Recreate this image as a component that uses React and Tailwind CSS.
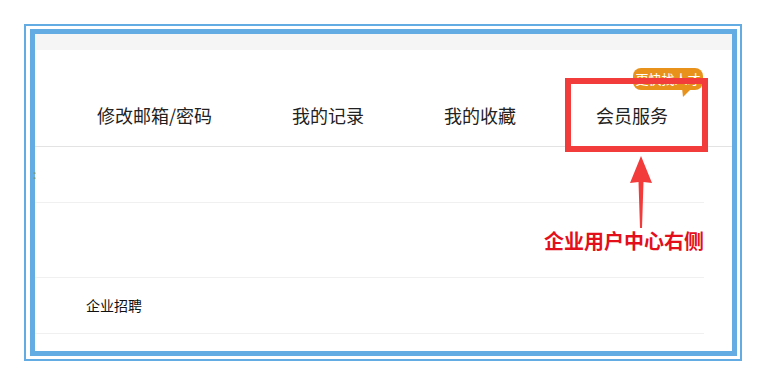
import React from 'react';

const navItems = ['修改邮箱/密码', '我的记录', '我的收藏', '会员服务'];

const App = () => {
    return (
        <div
            className="relative w-[767px] h-[386px] bg-white overflow-hidden"
            style={{ fontFamily: '"Noto Sans CJK SC", "Noto Sans", sans-serif' }}
        >
            <div className="ml-[24px] mt-[24px] w-[718px] h-[337px] border-2 border-[#62abe3] pt-[3px] pl-[4px] pr-[3px] pb-[3px]">
                <div className="w-full h-full border-[5px] border-[#62abe3] bg-white flex flex-col">
                    <div className="h-[16px] bg-[#f5f5f5]" />
                    <div className="h-[97px] border-b border-[#e3e3e3] pl-[62px] pt-[53px] flex gap-[80px] text-[18px] leading-[24px] text-[#222]">
                        {navItems.map((item) => (
                            <span key={item}>{item}</span>
                        ))}
                    </div>
                    <div className="mr-[28px]">
                        <div className="h-[56px] border-b border-[#f0f0f0] flex items-center text-[12px] text-[#7a9a7a] pb-[2px]">
                            <span className="-ml-[2px]">:</span>
                        </div>
                        <div className="h-[75px] border-b border-[#f0f0f0]" />
                        <div className="h-[56px] border-b border-[#f0f0f0] pl-[51px] flex items-center text-[14px] text-[#111]">
                            企业招聘
                        </div>
                    </div>
                </div>
            </div>

            {/* badge */}
            <div className="absolute left-[633px] top-[68px] w-[70px] h-[22px] rounded-[8px] bg-[#e8921c] text-white text-[13px] leading-[22px] text-center">
                更快找人才
            </div>
            <svg className="absolute left-[680px] top-[88px]" width="12" height="9" viewBox="0 0 12 9">
                <path d="M2 0 L12 0 L3 9 Z" fill="#e8921c" />
            </svg>

            {/* red annotation box */}
            <div className="absolute left-[565px] top-[78px] w-[143px] h-[74px] border-[6px] border-[#f23c3c]" />

            {/* arrow */}
            <svg className="absolute left-[628px] top-[156px]" width="26" height="74" viewBox="0 0 26 74">
                <path d="M13 0 L24 27 L15.5 26 L14 72 L12 72 L10.5 26 L2 27 Z" fill="#f23c3c" />
            </svg>

            <div className="absolute left-[544px] top-[228px] text-[20px] leading-[26px] font-bold text-[#e3101c] tracking-[0px]">
                企业用户中心右侧
            </div>
        </div>
    );
};

export default App;
